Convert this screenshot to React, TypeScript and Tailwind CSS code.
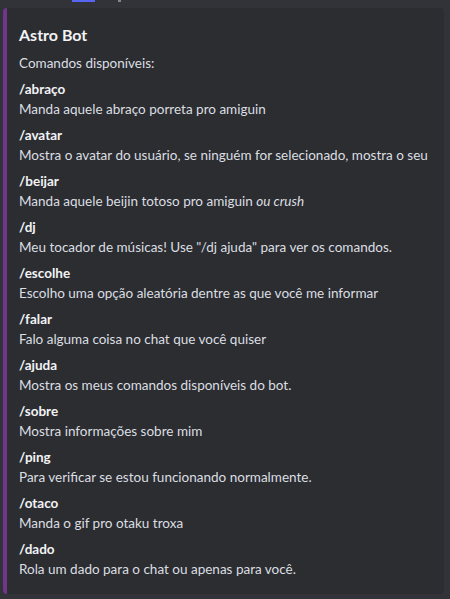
import React from "react";

const commands: { name: string; desc: React.ReactNode }[] = [
  { name: "/abraço", desc: "Manda aquele abraço porreta pro amiguin" },
  { name: "/avatar", desc: "Mostra o avatar do usuário, se ninguém for selecionado, mostra o seu" },
  {
    name: "/beijar",
    desc: (
      <>
        Manda aquele beijin totoso pro amiguin <em>ou crush</em>
      </>
    ),
  },
  { name: "/dj", desc: 'Meu tocador de músicas! Use "/dj ajuda" para ver os comandos.' },
  { name: "/escolhe", desc: "Escolho uma opção aleatória dentre as que você me informar" },
  { name: "/falar", desc: "Falo alguma coisa no chat que você quiser" },
  { name: "/ajuda", desc: "Mostra os meus comandos disponíveis do bot." },
  { name: "/sobre", desc: "Mostra informações sobre mim" },
  { name: "/ping", desc: "Para verificar se estou funcionando normalmente." },
  { name: "/otaco", desc: "Manda o gif pro otaku troxa" },
  { name: "/dado", desc: "Rola um dado para o chat ou apenas para você." },
];

const App = () => {
  return (
    <div className="min-h-screen bg-[#313338] font-['Lato',sans-serif]">
      {/* cut-off row above the embed */}
      <div className="flex h-2 items-start">
        <div className="ml-[72px] h-[2px] w-[23px] bg-[#5865f2]" />
        <div className="ml-[23px] h-[2px] w-[3px] bg-[#80848e]" />
      </div>

      {/* Embed */}
      <div className="ml-[3px] mr-[6px] rounded border-l-4 border-[#71368a] bg-[#2b2d31] pt-2 pr-2 pb-4 pl-3">
        <h2 className="mt-2 text-[16px] leading-[22px] font-bold text-[#f2f3f5]">Astro Bot</h2>
        <p className="mt-2 text-[13.5px] leading-[18px] text-[#dbdee1]">Comandos disponíveis:</p>

        <div className="mt-2 flex flex-col gap-2">
          {commands.map((c) => (
            <div key={c.name}>
              <div className="mb-[2px] text-[13.5px] leading-[18px] font-bold text-[#f2f3f5]">{c.name}</div>
              <div className="text-[13.5px] leading-[18px] text-[#dbdee1]">{c.desc}</div>
            </div>
          ))}
        </div>
      </div>
    </div>
  );
};

export default App;
